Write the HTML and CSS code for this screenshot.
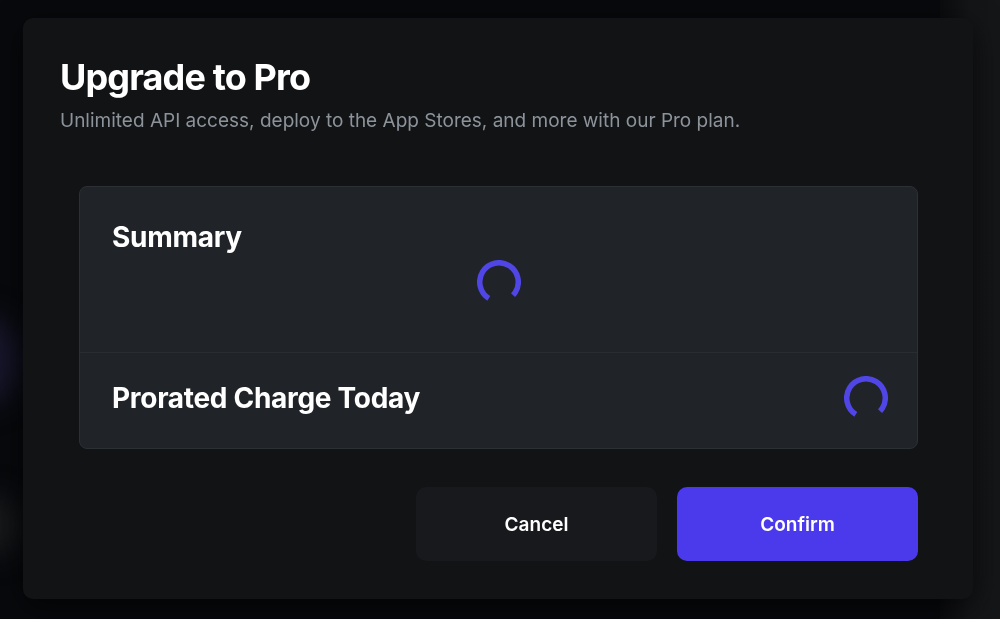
FILE: index.html
```html
<!DOCTYPE html>
<html lang="en">
<head>
  <meta charset="UTF-8">
  <title>Upgrade to Pro</title>
  <meta name="viewport" content="width=device-width, initial-scale=1.0">
  <link rel="stylesheet" href="styles.css">
</head>
<body>

  <div class="backdrop">
    <div class="blob blob-purple"></div>
    <div class="blob blob-grey"></div>
    <div class="side-panel"></div>
  </div>

  <div class="modal">
    <h1>Upgrade to Pro</h1>
    <p class="subtitle">Unlimited API access, deploy to the App Stores, and more with our Pro plan.</p>

    <div class="card">
      <div class="summary">
        <h2>Summary</h2>
        <svg class="spinner spinner-center" width="44" height="44" viewBox="0 0 44 44">
          <circle cx="22" cy="22" r="19.25" fill="none" stroke="#4f46e5" stroke-width="5.5"
                  stroke-dasharray="94 121" transform="rotate(122 22 22)"/>
        </svg>
      </div>
      <div class="charge">
        <h2>Prorated Charge Today</h2>
        <svg class="spinner" width="44" height="44" viewBox="0 0 44 44">
          <circle cx="22" cy="22" r="19.25" fill="none" stroke="#4f46e5" stroke-width="5.5"
                  stroke-dasharray="94 121" transform="rotate(122 22 22)"/>
        </svg>
      </div>
    </div>

    <div class="actions">
      <button class="btn btn-cancel">Cancel</button>
      <button class="btn btn-confirm">Confirm</button>
    </div>
  </div>

</body>
</html>
```

FILE: styles.css
```css
body {
  margin: 0;
  padding: 18px 27px 20px 23px;
  background-color: #07090c;
  font-family: Inter, "Noto Sans", sans-serif;
  color: #fff;
  overflow: hidden;
  height: 619px;
  box-sizing: border-box;
}

.backdrop {
  position: fixed;
  inset: 0;
  z-index: 0;
  overflow: hidden;
}

.blob {
  position: absolute;
  border-radius: 50%;
  filter: blur(14px);
}

.blob-purple {
  left: -45px;
  top: 315px;
  width: 65px;
  height: 90px;
  background: #18162c;
}

.blob-grey {
  left: -40px;
  top: 495px;
  width: 62px;
  height: 60px;
  background: #18191b;
}

.side-panel {
  position: absolute;
  right: 0;
  top: 0;
  width: 60px;
  height: 100%;
  background: linear-gradient(to right, #0b0c0e, #141517 50%, #151618);
}

.modal {
  position: relative;
  z-index: 1;
  width: 950px;
  box-sizing: border-box;
  padding: 37px 55px 38px 37px;
  background: #121315;
  border-radius: 10px;
  box-shadow: 0 8px 30px rgba(0, 0, 0, 0.6);
}

h1 {
  margin: 0;
  font-size: 36px;
  line-height: 44px;
  font-weight: 700;
  letter-spacing: -0.85px;
}

.subtitle {
  margin: 10px 0 0;
  font-size: 19px;
  line-height: 24px;
  color: #8c939b;
}

.card {
  margin: 53px 0 0 19px;
  background: #202327;
  border: 1px solid #2c3035;
  border-radius: 8px;
}

h2 {
  margin: 0;
  font-size: 28px;
  line-height: 34px;
  font-weight: 700;
  letter-spacing: -0.3px;
}

.summary {
  padding: 33px 32px 48px;
  border-bottom: 1px solid #292d31;
}

.spinner {
  display: block;
}

.spinner-center {
  margin: 6px auto 0;
}

.charge {
  display: flex;
  align-items: center;
  justify-content: space-between;
  height: 95px;
  box-sizing: border-box;
  padding: 0 29px 5px 32px;
}

.actions {
  display: flex;
  justify-content: flex-end;
  gap: 20px;
  margin-top: 38px;
}

.btn {
  width: 241px;
  height: 74px;
  border: none;
  border-radius: 10px;
  font-family: Inter, "Noto Sans", sans-serif;
  font-size: 19px;
  font-weight: 600;
  color: #fff;
  cursor: pointer;
}

.btn-cancel {
  background: #17191c;
}

.btn-confirm {
  background: #4b3aeb;
}
```
